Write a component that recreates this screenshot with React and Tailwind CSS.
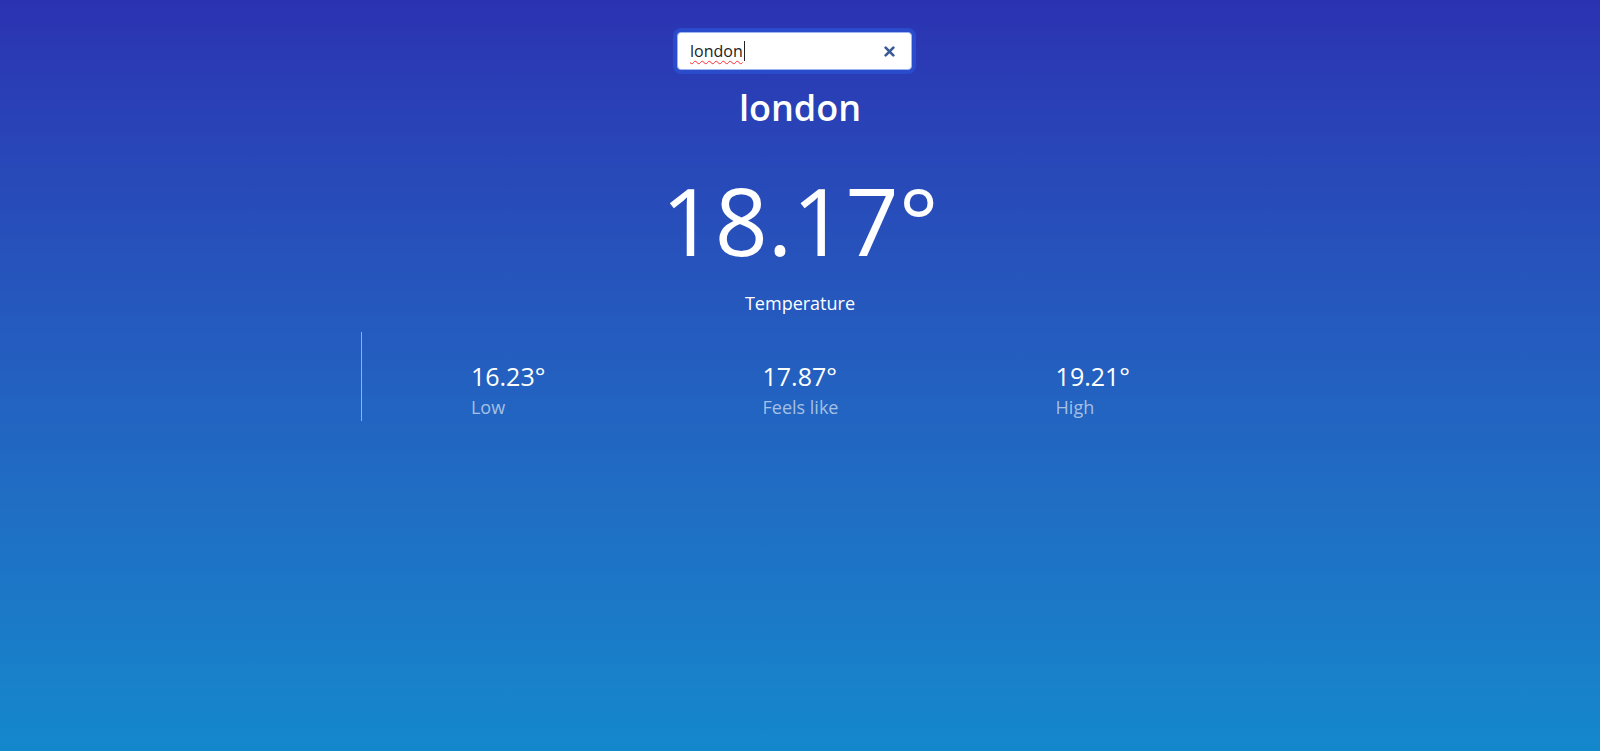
export default function App() {
  const stats = [
    { v: "16.23°", l: "Low" },
    { v: "17.87°", l: "Feels like" },
    { v: "19.21°", l: "High" },
  ];
  return (
    <div
      className="min-h-screen w-full bg-gradient-to-b from-[#2B32B2] to-[#1488CC] text-white flex flex-col items-center pt-[32px]"
      style={{ fontFamily: '"Open Sans", "Liberation Sans", sans-serif' }}
    >
      <div className="mr-[11px] w-[235px] h-[38px] bg-white rounded-[4px] border border-[#9db6ef] ring-4 ring-[#2a4bcb] flex items-center pl-[12px] pr-[16px]">
        <span className="text-[16px] text-[#222] underline decoration-wavy decoration-red-500 decoration-1 underline-offset-[3px]">
          london
        </span>
        <span className="w-px h-[20px] bg-[#222] ml-px" />
        <span className="ml-auto text-[#3a5a96]">
          <svg width="11" height="11" viewBox="0 0 10 10">
            <path d="M1.5 1.5 L8.5 8.5 M8.5 1.5 L1.5 8.5" stroke="currentColor" strokeWidth="2.4" strokeLinecap="round" />
          </svg>
        </span>
      </div>

      <h1 className="mt-[13px] text-[36px] leading-[49px] font-semibold">london</h1>

      <div className="mt-[41px] text-[93px] leading-[94px] font-normal">18.17°</div>

      <div className="mt-[24px] text-[18px] leading-[24px]">Temperature</div>

      <div className="mt-[17px] w-[878px] border-l border-white/50 grid grid-cols-3 pt-[27px] pb-[2px]">
        {stats.map((s) => (
          <div key={s.l} className="flex justify-center">
            <div className="text-left">
              <div className="text-[25px] leading-[34px]">{s.v}</div>
              <div className="mt-[2px] text-[18px] leading-[24px] text-white/60">{s.l}</div>
            </div>
          </div>
        ))}
      </div>
    </div>
  );
}
